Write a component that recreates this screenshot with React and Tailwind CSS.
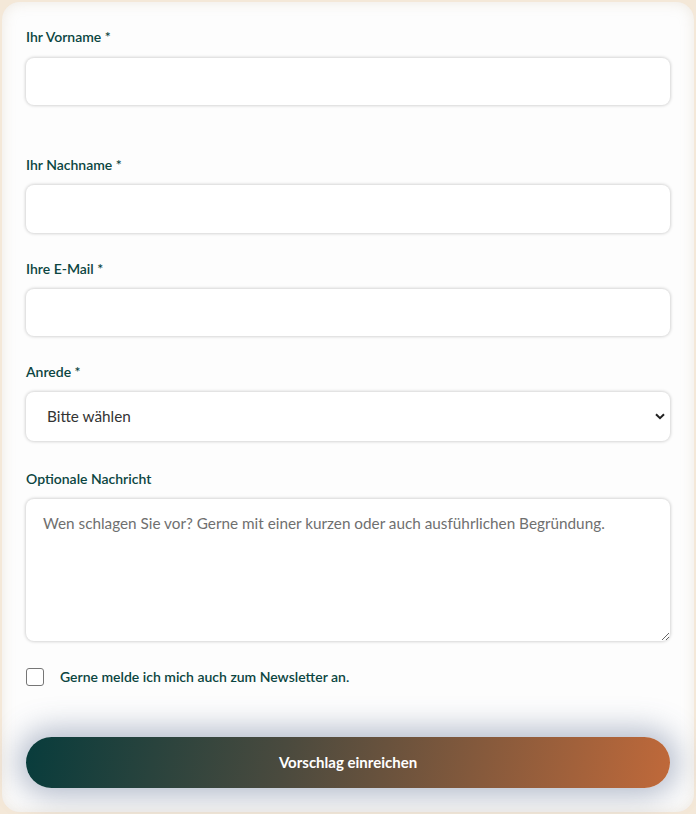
import React from "react";

function Label({ children, className = "" }) {
  return (
    <label className={"block text-[14px] leading-5 font-semibold text-[#0b4541] " + className}>
      {children}
    </label>
  );
}

const fieldCls =
  "block w-full bg-white rounded-[8px] shadow-[0_0_3px_1px_rgba(0,0,0,0.16)] outline-none";

export default function App() {
  return (
    <div
      className="w-[696px] h-[814px] bg-[#f4e8d8] p-[2px]"
      style={{ fontFamily: "Lato, 'Open Sans', sans-serif" }}
    >
      <div className="h-full rounded-[18px] bg-[#fdfdfd] shadow-[inset_0_0_14px_rgba(190,170,140,0.25)] px-[24px] pt-[25px]">
        <Label className="mb-[11px]">Ihr Vorname *</Label>
        <input className={fieldCls + " h-[47px]"} />

        <Label className="mt-[50px] mb-[10px]">Ihr Nachname *</Label>
        <input className={fieldCls + " h-[48px]"} />

        <Label className="mt-[26px] mb-[10px]">Ihre E-Mail *</Label>
        <input className={fieldCls + " h-[47px]"} />

        <Label className="mt-[26px] mb-[10px]">Anrede *</Label>
        <div className="relative">
          <select className={fieldCls + " h-[49px] appearance-none pl-[21px] text-[15.3px] text-[#333333]"}>
            <option>Bitte wählen</option>
          </select>
          <svg
            className="absolute right-[5px] top-[21px] pointer-events-none"
            width="10"
            height="7"
            viewBox="0 0 10 7"
          >
            <path d="M1 1.2 L5 5.2 L9 1.2" stroke="#222" strokeWidth="2" fill="none" />
          </svg>
        </div>

        <Label className="mt-[28px] mb-[10px]">Optionale Nachricht</Label>
        <textarea
          className={fieldCls + " h-[142px] px-[17px] pt-[13px] text-[15.3px] text-[#333] placeholder:text-[#6f6f6f] resize-y"}
          placeholder="Wen schlagen Sie vor? Gerne mit einer kurzen oder auch ausführlichen Begründung."
        />

        <div className="flex items-center mt-[25px] gap-[16px]">
          <span className="w-[18px] h-[18px] rounded-[3px] border border-[#767676] bg-white" />
          <span className="text-[14px] font-semibold text-[#0b4541]">
            Gerne melde ich mich auch zum Newsletter an.
          </span>
        </div>

        <button className="mt-[50px] w-[644px] h-[51px] rounded-full bg-[linear-gradient(100deg,#083c3c_0%,#4a4a3e_40%,#c0693a_100%)] shadow-[0_0_30px_8px_rgba(70,90,130,0.4)] text-white text-[15px] font-bold">
          Vorschlag einreichen
        </button>
      </div>
    </div>
  );
}
